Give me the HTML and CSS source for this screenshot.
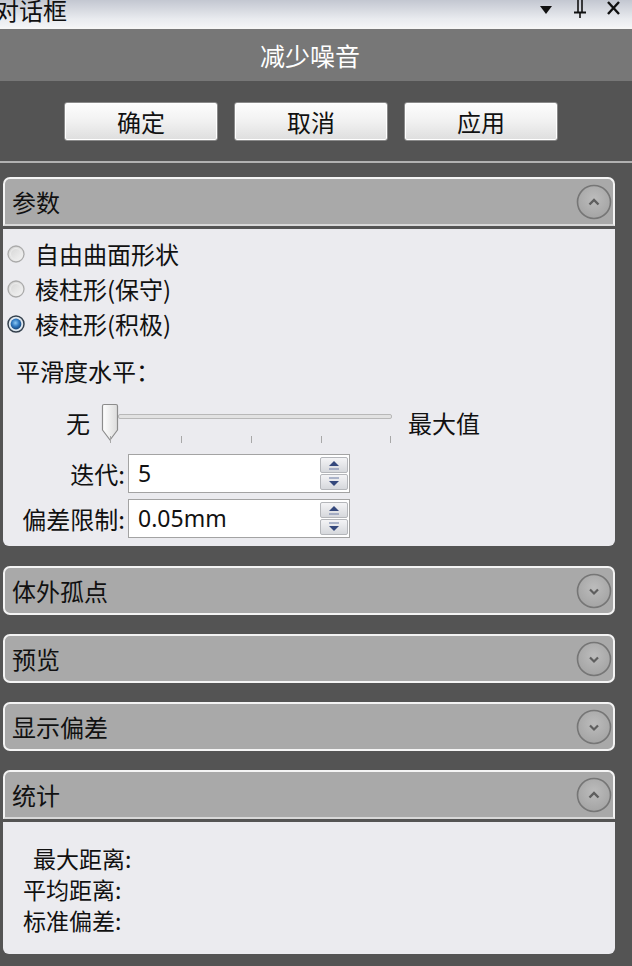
FILE: index.html
```html
<!DOCTYPE html>
<html lang="zh-CN">
<head>
<meta charset="utf-8">
<title>减少噪音</title>
<link rel="stylesheet" href="styles.css">
</head>
<body>
<div class="titlebar">
  <span class="titlebar-text">对话框</span>
  <svg class="titlebar-icons" width="84" height="20" viewBox="0 0 84 20">
    <polygon points="4,6 16,6 10,14" fill="#111"/>
    <line x1="42" y1="0" x2="42" y2="12" stroke="#111" stroke-width="1.6"/>
    <line x1="46" y1="0" x2="46" y2="12" stroke="#111" stroke-width="1.6"/>
    <line x1="38" y1="12.5" x2="50" y2="12.5" stroke="#111" stroke-width="2"/>
    <line x1="44" y1="12" x2="44" y2="18" stroke="#111" stroke-width="1.6"/>
    <line x1="72" y1="2" x2="83" y2="14" stroke="#111" stroke-width="2.4"/>
    <line x1="83" y1="2" x2="72" y2="14" stroke="#111" stroke-width="2.4"/>
  </svg>
</div>
<div class="dialog-header">减少噪音</div>
<div class="button-row">
  <button class="btn">确定</button>
  <button class="btn">取消</button>
  <button class="btn">应用</button>
</div>
<div class="separator"></div>

<section class="panel panel-first">
  <div class="panel-header open">
    <span>参数</span>
    <svg class="toggle" width="36" height="36" viewBox="0 0 36 36">
      <defs><radialGradient id="tg1" cx="50%" cy="40%" r="60%"><stop offset="0" stop-color="#bcbcbc"/><stop offset="1" stop-color="#a4a4a4"/></radialGradient></defs>
      <circle cx="18" cy="18" r="16.5" fill="url(#tg1)" stroke="#767676" stroke-width="1.6"/>
      <polyline points="13.5,20.5 18,16 22.5,20.5" fill="none" stroke="#5e5e5e" stroke-width="2.4"/>
    </svg>
  </div>
  <div class="panel-body params">
    <label class="radio-row">
      <svg class="radio" width="18" height="18" viewBox="0 0 18 18">
        <defs><linearGradient id="ru" x1="0" y1="0" x2="1" y2="1"><stop offset="0" stop-color="#d2d2d2"/><stop offset="1" stop-color="#f6f6f6"/></linearGradient></defs>
        <circle cx="9" cy="9" r="8" fill="url(#ru)" stroke="#aaaaaa" stroke-width="1.3"/>
        <circle cx="9" cy="9" r="5.5" fill="none" stroke="#ececec" stroke-width="1"/>
      </svg>
      <span>自由曲面形状</span>
    </label>
    <label class="radio-row">
      <svg class="radio" width="18" height="18" viewBox="0 0 18 18">
        <circle cx="9" cy="9" r="8" fill="url(#ru)" stroke="#aaaaaa" stroke-width="1.3"/>
        <circle cx="9" cy="9" r="5.5" fill="none" stroke="#ececec" stroke-width="1"/>
      </svg>
      <span>棱柱形(保守)</span>
    </label>
    <label class="radio-row">
      <svg class="radio" width="18" height="18" viewBox="0 0 18 18">
        <defs><radialGradient id="rc" cx="45%" cy="40%" r="55%"><stop offset="0" stop-color="#8cc8f4"/><stop offset="0.6" stop-color="#2f78c0"/><stop offset="1" stop-color="#1c4f86"/></radialGradient></defs>
        <circle cx="9" cy="9" r="8" fill="#dfe8f0" stroke="#34404c" stroke-width="1.5"/>
        <circle cx="9" cy="9" r="5.4" fill="url(#rc)"/>
      </svg>
      <span>棱柱形(积极)</span>
    </label>
    <div class="smooth-label">平滑度水平：</div>
    <div class="slider-row">
      <span class="slider-label">无</span>
      <div class="slider">
        <div class="slider-track"></div>
        <svg class="slider-thumb" width="20" height="39" viewBox="0 0 20 39">
          <defs><linearGradient id="th" x1="0" y1="0" x2="1" y2="0"><stop offset="0" stop-color="#ffffff"/><stop offset="1" stop-color="#dcdcdc"/></linearGradient></defs>
          <path d="M4,1.5 H16 Q17.5,1.5 17.5,3 V27 L10,37 L2.5,27 V3 Q2.5,1.5 4,1.5 Z" fill="url(#th)" stroke="#8c8c8c" stroke-width="1.2" stroke-linejoin="round"/>
        </svg>
        <span class="tick t1"></span>
        <span class="tick t2"></span>
        <span class="tick t3"></span>
        <span class="tick t4"></span>
        <span class="tick t5"></span>
      </div>
      <span class="slider-label max">最大值</span>
    </div>
    <div class="spin-grid">
      <span class="spin-label">迭代:</span>
      <div class="spinbox">
        <span class="spin-value">5</span>
        <div class="spin-btns">
          <span class="spin-btn"><svg width="16" height="12" viewBox="0 0 16 12"><polygon points="3,7 13,7 8,2" fill="#34487c"/><line x1="3" y1="10" x2="13" y2="10" stroke="#7f8db0" stroke-width="1.2"/></svg></span>
          <span class="spin-btn"><svg width="16" height="12" viewBox="0 0 16 12"><line x1="3" y1="2" x2="13" y2="2" stroke="#7f8db0" stroke-width="1.2"/><polygon points="3,5 13,5 8,10" fill="#34487c"/></svg></span>
        </div>
      </div>
      <span class="spin-label">偏差限制:</span>
      <div class="spinbox">
        <span class="spin-value">0.05mm</span>
        <div class="spin-btns">
          <span class="spin-btn"><svg width="16" height="12" viewBox="0 0 16 12"><polygon points="3,7 13,7 8,2" fill="#34487c"/><line x1="3" y1="10" x2="13" y2="10" stroke="#7f8db0" stroke-width="1.2"/></svg></span>
          <span class="spin-btn"><svg width="16" height="12" viewBox="0 0 16 12"><line x1="3" y1="2" x2="13" y2="2" stroke="#7f8db0" stroke-width="1.2"/><polygon points="3,5 13,5 8,10" fill="#34487c"/></svg></span>
        </div>
      </div>
    </div>
  </div>
</section>

<section class="panel panel-gap">
  <div class="panel-header closed">
    <span>体外孤点</span>
    <svg class="toggle" width="36" height="36" viewBox="0 0 36 36">
      <circle cx="18" cy="18" r="16.5" fill="url(#tg1)" stroke="#767676" stroke-width="1.6"/>
      <polyline points="14,16.5 18,20.5 22,16.5" fill="none" stroke="#5e5e5e" stroke-width="2.2"/>
    </svg>
  </div>
</section>

<section class="panel panel-gap">
  <div class="panel-header closed">
    <span>预览</span>
    <svg class="toggle" width="36" height="36" viewBox="0 0 36 36">
      <circle cx="18" cy="18" r="16.5" fill="url(#tg1)" stroke="#767676" stroke-width="1.6"/>
      <polyline points="14,16.5 18,20.5 22,16.5" fill="none" stroke="#5e5e5e" stroke-width="2.2"/>
    </svg>
  </div>
</section>

<section class="panel panel-gap">
  <div class="panel-header closed">
    <span>显示偏差</span>
    <svg class="toggle" width="36" height="36" viewBox="0 0 36 36">
      <circle cx="18" cy="18" r="16.5" fill="url(#tg1)" stroke="#767676" stroke-width="1.6"/>
      <polyline points="14,16.5 18,20.5 22,16.5" fill="none" stroke="#5e5e5e" stroke-width="2.2"/>
    </svg>
  </div>
</section>

<section class="panel panel-gap">
  <div class="panel-header open">
    <span>统计</span>
    <svg class="toggle" width="36" height="36" viewBox="0 0 36 36">
      <circle cx="18" cy="18" r="16.5" fill="url(#tg1)" stroke="#767676" stroke-width="1.6"/>
      <polyline points="13.5,20.5 18,16 22.5,20.5" fill="none" stroke="#5e5e5e" stroke-width="2.4"/>
    </svg>
  </div>
  <div class="panel-body stats">
    <div class="stat-row first">最大距离:</div>
    <div class="stat-row">平均距离:</div>
    <div class="stat-row">标准偏差:</div>
  </div>
</section>
</body>
</html>
```

FILE: styles.css
```css
html {
  background: #545454;
}
body {
  margin: 0;
  width: 632px;
  height: 966px;
  overflow: hidden;
  background: #545454;
  font-family: "Noto Sans CJK SC", "Noto Sans", sans-serif;
  font-size: 24px;
  color: #111;
}

.titlebar {
  height: 27px;
  display: flex;
  align-items: flex-start;
  background: linear-gradient(#c3c7d1, #e9ebef 70%, #f3f4f6);
  border-bottom: 2px solid #f6f6f6;
  overflow: hidden;
}
.titlebar-text {
  margin-left: -5px;
  margin-top: -3px;
  line-height: 26px;
  font-size: 24px;
  color: #111;
}
.titlebar-icons {
  margin-left: auto;
  margin-right: 12px;
  display: block;
}

.dialog-header {
  height: 52px;
  background: #777777;
  color: #ffffff;
  font-size: 25px;
  line-height: 52px;
  text-align: center;
  padding-right: 12px;
}

.button-row {
  display: flex;
  gap: 16px;
  padding: 21px 0 0 64px;
}
.btn {
  width: 154px;
  height: 39px;
  padding: 0;
  border: 1px solid #8a8a8a;
  border-radius: 3px;
  background: linear-gradient(#fdfdfd, #f1f1f1 50%, #dedede);
  box-shadow: inset 0 0 0 1px #ffffff;
  font-family: "Noto Sans CJK SC", sans-serif;
  font-size: 24px;
  line-height: 37px;
  color: #111;
}

.separator {
  margin-top: 20px;
  height: 2px;
  background: #b1b1b1;
}

.panel {
  margin-left: 3px;
  width: 612px;
}
.panel-first {
  margin-top: 14px;
}
.panel-gap {
  margin-top: 20px;
}
.panel-gap + .panel-gap {
  margin-top: 19px;
}

.panel-header {
  box-sizing: border-box;
  height: 49px;
  display: flex;
  align-items: center;
  justify-content: space-between;
  padding: 0 1px 0 7px;
  background: #a9a9a9;
  border: 2px solid #f4f4f4;
  line-height: 30px;
}
.panel-header.open {
  border-bottom-color: #d8d8d8;
  border-radius: 7px 7px 0 0;
}
.panel-header.closed {
  border-radius: 7px;
}
.toggle {
  display: block;
}

.panel-body {
  margin-top: 3px;
  background: #ebebef;
  border-radius: 0 0 6px 6px;
}

.params {
  padding: 7px 0 8px 0;
}
.radio-row {
  height: 35px;
  display: flex;
  align-items: center;
  padding-left: 4px;
}
.radio {
  display: block;
  margin-right: 10px;
}

.smooth-label {
  margin-top: 13px;
  height: 34px;
  line-height: 34px;
  padding-left: 13px;
}

.slider-row {
  margin-top: 15px;
  height: 45px;
  display: flex;
  align-items: flex-start;
  padding-left: 63px;
}
.slider-label {
  margin-top: 5px;
  line-height: 30px;
}
.slider-label.max {
  margin-left: 12px;
}
.slider {
  position: relative;
  width: 296px;
  height: 45px;
  margin-left: 10px;
}
.slider-track {
  position: absolute;
  left: 18px;
  top: 11px;
  width: 272px;
  height: 3px;
  background: #e2e2e2;
  border: 1px solid #b8b8b8;
  border-radius: 2px;
}
.slider-thumb {
  position: absolute;
  left: 0;
  top: 0;
  display: block;
}
.tick {
  position: absolute;
  top: 33px;
  width: 1px;
  height: 7px;
  background: #a8a8a8;
}
.t1 { left: 10px; }
.t2 { left: 81px; }
.t3 { left: 151px; }
.t4 { left: 221px; }
.t5 { left: 290px; }

.spin-grid {
  margin-top: 6px;
  display: grid;
  grid-template-columns: 108px 222px;
  grid-auto-rows: 39px;
  column-gap: 3px;
  row-gap: 6px;
  padding-left: 14px;
}
.spin-label {
  text-align: right;
  line-height: 39px;
}
.spinbox {
  box-sizing: border-box;
  display: flex;
  align-items: center;
  background: #ffffff;
  border: 1px solid #a3a3a3;
}
.spin-value {
  padding-left: 9px;
  font-family: "Noto Sans", sans-serif;
  font-size: 23px;
  line-height: 37px;
  color: #111;
}
.spin-btns {
  margin-left: auto;
  margin-right: 1px;
  display: flex;
  flex-direction: column;
  gap: 1px;
}
.spin-btn {
  box-sizing: border-box;
  width: 28px;
  height: 16px;
  display: flex;
  align-items: center;
  justify-content: center;
  background: linear-gradient(#f4f4f6, #d6d8dc);
  border: 1px solid #b4b6ba;
  border-radius: 2px;
}
.spin-btn svg {
  display: block;
}

.stats {
  height: 132px;
  box-sizing: border-box;
  padding: 21px 0 0 20px;
  font-size: 23px;
}
.stat-row {
  height: 31px;
  line-height: 31px;
}
.stat-row.first {
  padding-left: 10px;
}
```
